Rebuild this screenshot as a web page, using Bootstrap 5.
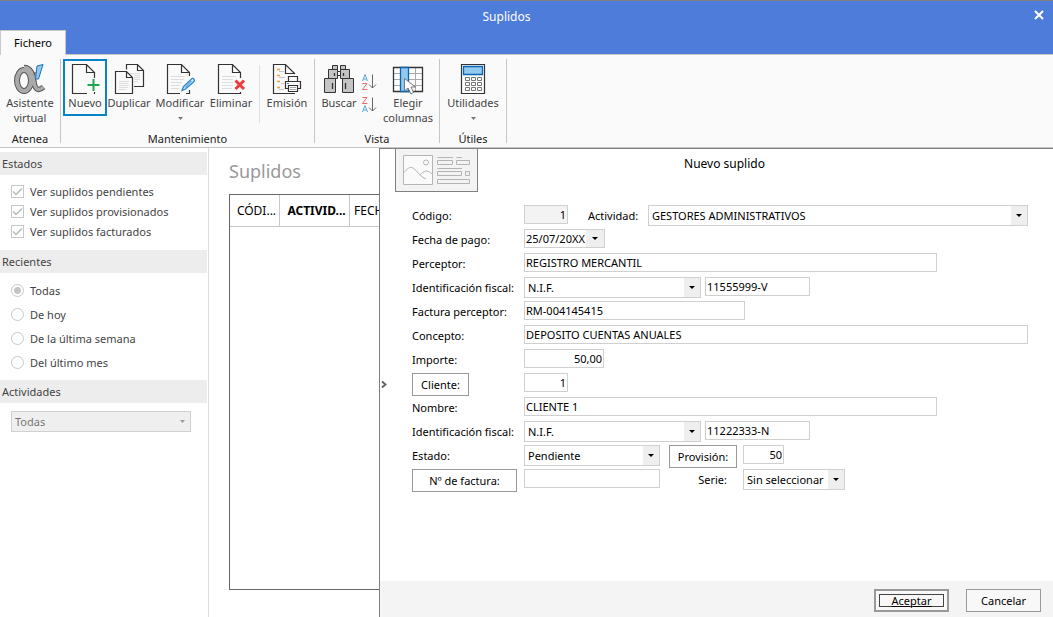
<!DOCTYPE html>
<html lang="es">
<head>
<meta charset="utf-8">
<meta name="viewport" content="width=device-width, initial-scale=1">
<title>Suplidos</title>
<link rel="stylesheet" href="https://cdn.jsdelivr.net/npm/bootstrap@5.3.0/dist/css/bootstrap.min.css">
<style>
  body { font-family: "Noto Sans", "Open Sans", sans-serif; font-size: 11px; line-height: 15px; color: #000; }
  button, input, select { font-family: inherit; font-size: inherit; line-height: inherit; color: inherit; }

  /* Title bar and tab */
  .titlebar { background: #4e7cdb; border-top: 1px solid #808080; padding: 3px 40px 0 0; }
  .titlebar h1 { font-size: 12px; line-height: 26px; }
  .close-x { width: 28px; height: 24px; top: 0; right: 0; }
  .tabstrip { background: #4e7cdb; height: 25px; }
  .tab-file { background: #fafafa; width: 66px; border: 1px solid #c8c8c8; border-bottom: 0; padding-bottom: 1px; position: relative; z-index: 1; }

  /* Ribbon */
  .ribbon { background: #fafafa; border-top: 1px solid #c8c8c8; border-bottom: 1px solid #c6c6c6; height: 94px; margin-top: -1px; padding: 4px 0; }
  .rgroup { border-right: 1px solid #c6c6c6; padding: 0 2px; }
  .rgroup .caption-text { line-height: 9px; color: #222; }
  .tool { border: 2px solid transparent; background: none; padding: 2px 0 0; height: 57px; color: #444; white-space: nowrap; display: flex; flex-direction: column; align-items: center; }
  .tool.tall { height: 66px; }
  .tool svg { flex: none; }
  .tool .drop { margin-top: 7px; }
  .tool.current { border-color: #0a84c8; }
  .w44 { width: 44px; } .w50 { width: 50px; } .w56 { width: 56px; } .w58 { width: 58px; }
  .sep { width: 1px; height: 58px; background: #e0e0e0; margin: 6px 2px 0 6px; }
  .sorters { padding-top: 14px; gap: 5px; }
  .sorter { border: 0; background: none; padding: 0; display: block; width: 18px; height: 18px; }
  .sorter svg { display: block; }

  /* Sidebar */
  .side { width: 209px; border-right: 1px solid #dcdcdc; color: #444; padding-top: 4px; }
  .side h2 { font-size: 11px; line-height: 23px; background: #ededed; margin: 0 1px 0 0; padding-left: 2px; }
  .side label { margin-left: 6px; }
  .side input { appearance: none; width: 13px; height: 13px; border: 1px solid #c8c8c8; margin: 0; background: #fff center no-repeat; }
  .side input[type=checkbox] { background-image: url("data:image/svg+xml,%3Csvg xmlns='http://www.w3.org/2000/svg' width='11' height='11'%3E%3Cpath d='M1 5.5L4 8.5L10 2.5' fill='none' stroke='%23b8b8b8' stroke-width='1.5'/%3E%3C/svg%3E"); }
  .side input[type=radio] { border-radius: 50%; }
  .side input[type=radio]:checked { background-image: radial-gradient(circle, #c4c4c4 3px, transparent 4px); }
  .checks { padding: 6px 11px 9px; }
  .checks > div { height: 20px; }
  .radios { padding: 5px 11px 6px; }
  .radios > div { height: 24px; }
  .side select { appearance: none; display: block; width: 180px; height: 21px; margin: 8px 0 0 11px; border: 1px solid #d0d0d0; border-radius: 0; padding: 0 3px; color: #777; opacity: 1;
    background: #efefef url("data:image/svg+xml,%3Csvg xmlns='http://www.w3.org/2000/svg' width='5' height='3'%3E%3Cpath d='M0 0H5L2.5 3Z' fill='%23999'/%3E%3C/svg%3E") no-repeat right 5px center; }

  /* List behind the dialog */
  .list-pane { width: 170px; padding: 11px 0 27px 20px; }
  .list-pane h2 { font-size: 18px; line-height: 24px; color: #999; margin-bottom: 11px; }
  .list-box { border: 1px solid #666; width: 780px; }
  .list-box table { border-collapse: separate; border-spacing: 0; table-layout: fixed; width: 100%; font-size: 12px; }
  .list-box th { height: 32px; font-weight: 400; border: solid #c8c8c8; border-width: 0 1px 1px 0; padding: 0 0 0 4px; }
  .col-code { width: 50px; } .col-act { width: 70px; }

  /* Dialog */
  .dlg { border: solid #808080; border-width: 1px 0 0 1px; min-width: 0; }
  .layout-btn { width: 83px; height: 44px; margin: -1px 0 0 15px; border: 1px solid #808080; background: #f3f3f3; padding: 0; }
  .layout-btn svg { display: block; margin: 0 auto; }
  .dlg-title { font-size: 12px; line-height: 30px; margin: 0 82px 0 0; }
  .entry { margin: 13px 25px 0 32px; }
  .entry .line { display: grid; grid-template-columns: 112px 1fr; height: 24px; align-items: start; justify-items: start; }
  .entry .line > div { width: 100%; }
  .entry label { line-height: 22px; white-space: nowrap; }
  .field { height: 19px; border: 1px solid #d0d0d0; padding: 0 1px 1px; min-width: 0; background: #fff; border-radius: 0; }
  .field.num { text-align: right; }
  .field:read-only { background: #f3f3f3; }
  div.field { background: #fff; }
  .pick { appearance: none; height: 21px; border: 1px solid #d0d0d0; border-radius: 0; padding: 0 18px 0 3px; min-width: 0;
    background: url("data:image/svg+xml,%3Csvg xmlns='http://www.w3.org/2000/svg' width='16' height='19'%3E%3Cpath d='M0 0H16V19H0Z' fill='%23efefef'/%3E%3Cpath d='M5 8H11L8 11Z'/%3E%3C/svg%3E") no-repeat right center #fff; }
  .plain { border: 1px solid #999; background: #fff; height: 23px; padding: 0; }
  .w-code { width: 44px; } .w-date { width: 81px; } .w-amount { width: 80px; }
  .w-type { width: 177px; } .w-id { width: 105px; } .w-invoice { width: 221px; }
  .w-name { width: 82%; } .w-state { width: 136px; } .w-serie { width: 102px; } .w-prov { width: 41px; }
  .b-client { width: 57px; } .b-invoice { width: 105px; } .b-prov { width: 68px; margin: 0 6px 0 9px; }
  .l-act { width: 60px; margin-left: 20px; } .l-serie { width: 83px; padding: 0 16px; text-align: right; }
  .date-in { border: 0; padding: 0 1px 1px; width: 61px; background: #fff; }
  .date-btn { width: 18px; border: 0; background: #efefef; padding: 0; display: flex; align-items: center; justify-content: center; }
  .foot { background: #f4f4f4; height: 36px; padding: 8px 12px 0; gap: 17px; }
  .foot .plain { width: 75px; background: #f8f8f8; }
  .foot .main-action { border: 2px solid #999; padding: 3px; }
  .main-action span { display: block; border: 1px solid #444; line-height: 11px; text-decoration: underline; }
  .expander { border: 0; background: none; padding: 0 1px; line-height: 1; }
</style>
</head>
<body class="d-flex flex-column min-vh-100 bg-white">

<header class="titlebar position-relative text-white text-center">
  <h1 class="m-0 fw-normal">Suplidos</h1>
  <button class="close-x position-absolute border-0 bg-transparent p-0" aria-label="Cerrar">
    <svg width="10" height="10" viewBox="0 0 10 10"><path d="M1 1L9 9M9 1L1 9" stroke="#fff" stroke-width="2"/></svg>
  </button>
</header>
<nav class="tabstrip d-flex">
  <a href="#" class="tab-file d-flex align-items-center justify-content-center text-black text-decoration-none">Fichero</a>
</nav>

<section class="ribbon d-flex">
  <div class="rgroup d-flex flex-column justify-content-between align-items-center">
    <button class="tool tall w56">
      <svg width="32" height="32" viewBox="0 0 32 32" fill="none">
        <g stroke="#555"><path d="M22 9C21 18 17 27 11 29" stroke-width="3"/><path d="M10 4.500C17 4.500 18.500 11 20 19C21 26 24 29 29.500 24" stroke-width="5.500"/><ellipse cx="10" cy="17.500" rx="7" ry="10.500" stroke-width="6"/></g>
        <g stroke="#aaa"><path d="M22 9C21 18 17 27 11 29" stroke-width="1.200"/><path d="M10 4.500C17 4.500 18.500 11 20 19C21 26 24 29 29.500 24" stroke-width="3.500"/><ellipse cx="10" cy="17.500" rx="7" ry="10.500" stroke-width="4"/></g>
        <path d="M23 3L29 1.500L24.500 16H21.500Z" fill="#92c9f0" stroke="#1e6fb5"/>
      </svg>
      <span>Asistente</span><span>virtual</span>
    </button>
    <div class="caption-text">Atenea</div>
  </div>

  <div class="rgroup d-flex flex-column justify-content-between align-items-center">
    <div class="d-flex">
      <button class="tool current w44">
        <svg width="32" height="32" viewBox="0 0 32 32" fill="none"><path d="M25.500 15V9.500L17.500 1.500H3.500V30.500H18M17.500 1.500V9.500H25.500M25.500 29V31" stroke="#333" stroke-width="1.200"/><path d="M24.500 16V28M18.500 22H30.500" stroke="#1da84f" stroke-width="2"/></svg>
        <span>Nuevo</span>
      </button>
      <button class="tool w44">
        <svg width="32" height="32" viewBox="0 0 32 32" fill="none"><path d="M13.500 6.500V1.500H24.500L30.500 7.500V23.500H21M24.500 1.500V7.500H30.500M13.500 8.500H2.500V30.500H19.500V14.500ZM13.500 8.500V14.500H19.500" stroke="#333" stroke-width="1.200"/><path d="M6 18.500H16M6 20.500H15M6 22.500H16M6 24.500H15M6 26.500H13M17 10.500H27M21 12.500H27M21 14.500H27M21 16.500H27M21 18.500H25" stroke="#ddd"/></svg>
        <span>Duplicar</span>
      </button>
      <button class="tool w58">
        <svg width="32" height="32" viewBox="0 0 32 32" fill="none"><path d="M25.500 13V9.500L17.500 1.500H3.500V30.500H16M17.500 1.500V9.500H25.500M25.500 27V30.500H22" stroke="#333" stroke-width="1.200"/><path d="M7 13.500H21M7 16.500H20M7 19.500H18M7 22.500H16M7 25.500H15" stroke="#ddd"/><path d="M18 27.500L19.500 23.500L28 15.500C30 15 31 17 30 18.500L21.500 26Z" fill="#cfe6f6" stroke="#2a87cc" stroke-width="1.300"/><path d="M21 24.500L27.500 18" stroke="#2a87cc"/></svg>
        <span>Modificar</span>
        <svg class="drop" width="5" height="3"><path d="M0 0H5L2.500 3Z" fill="#777"/></svg>
      </button>
      <button class="tool w44">
        <svg width="32" height="32" viewBox="0 0 32 32" fill="none"><path d="M25.500 15V9.500L17.500 1.500H3.500V30.500H25.500V29M17.500 1.500V9.500H25.500" stroke="#333" stroke-width="1.200"/><path d="M7 13.500H21M7 16.500H18M7 19.500H18M7 22.500H18M7 25.500H17" stroke="#ddd"/><path d="M20.500 17.500L29 26M29 17.500L20.500 26" stroke="#ef3b3b" stroke-width="3"/></svg>
        <span>Eliminar</span>
      </button>
      <div class="sep"></div>
      <button class="tool w50">
        <svg width="32" height="32" viewBox="0 0 32 32" fill="none"><path d="M24 11L14.500 1.500H2.500V30.500H24M14.500 1.500V10.500H24" stroke="#333" stroke-width="1.200"/><path d="M6 6.500H9M6 12.500H9M6 18.500H9M6 24.500H9" stroke="#f0a030" stroke-width="1.500"/><path d="M8 8.500H13M8 14.500H14M10 20.500H13M8 26.500H13" stroke="#c8c8c8"/><path d="M17.500 18V13.500H26.500V18M18 25.500H14.500V18.500H29.500V25.500H27" fill="#fafafa" stroke="#333" stroke-width="1.200"/><path d="M17.500 22.500H26.500V28.500H17.500Z" fill="#fff" stroke="#333" stroke-width="1.200"/><path d="M19 24.500H25M19 26.500H25" stroke="#aaa"/><path d="M16 20.500H18" stroke="#2a87cc"/></svg>
        <span>Emisión</span>
      </button>
    </div>
    <div class="caption-text">Mantenimiento</div>
  </div>

  <div class="rgroup d-flex flex-column justify-content-between align-items-center">
    <div class="d-flex">
      <button class="tool w44">
        <svg width="32" height="32" viewBox="0 0 32 32"><g fill="#c4c4c4" stroke="#333"><path d="M9.500 2.500H14.500V6.500H9.500ZM17.500 2.500H22.500V6.500H17.500ZM5.500 6.500H14.500V15.500H5.500ZM17.500 6.500H26.500V15.500H17.500ZM1.500 15.500H12.500V29.500H1.500ZM19.500 15.500H30.500V29.500H19.500Z"/><path d="M14.500 8.500H17.500V12.500H14.500Z" fill="#fff"/><path d="M11.500 10V13M20.500 10V13M9.500 20V26M22.500 20V26" stroke-width="1.300"/></g></svg>
        <span>Buscar</span>
      </button>
      <div class="sorters d-flex flex-column">
        <button class="sorter" aria-label="Orden ascendente"><svg width="18" height="18" viewBox="0 0 18 18" fill="none"><path d="M1.500 8L4 1.500L6.500 8M2.500 6H5.500" stroke="#58a9dc"/><path d="M1.500 10.500H6L1.500 16.500H6.500" stroke="#ee6a6a"/><path d="M11.500 1.500V15M8 11.500L11.500 15L15 11.500" stroke="#666"/></svg></button>
        <button class="sorter" aria-label="Orden descendente"><svg width="18" height="18" viewBox="0 0 18 18" fill="none"><path d="M1.500 1.500H6L1.500 7.500H6.500" stroke="#ee6a6a"/><path d="M1.500 16L4 9.500L6.500 16M2.500 14H5.500" stroke="#58a9dc"/><path d="M11.500 1.500V15M8 11.500L11.500 15L15 11.500" stroke="#666"/></svg></button>
      </div>
      <button class="tool tall w58">
        <svg width="32" height="32" viewBox="0 0 32 32" fill="none"><path d="M1.500 4.500H30.500V28.500H1.500Z" fill="#fff"/><path d="M2 10.500H30M2 16.500H30M2 22.500H30M23.500 5V28" stroke="#aaa"/><path d="M1.500 4.500H30.500V28.500H1.500Z" stroke="#333" stroke-width="1.300"/><path d="M8.500 4.500H16.500V28.500H8.500Z" fill="#92c9f0" stroke="#0a66b0" stroke-width="1.300"/><path d="M12.500 15.500V28L16 25L19 31L21.500 29.500L19 24H23.500Z" fill="#fff" stroke="#777"/></svg>
        <span>Elegir</span><span>columnas</span>
      </button>
    </div>
    <div class="caption-text">Vista</div>
  </div>

  <div class="rgroup d-flex flex-column justify-content-between align-items-center px-1">
    <button class="tool w58">
      <svg width="32" height="32" viewBox="0 0 32 32" fill="none"><path d="M4.500 1.500H27.500V30.500H4.500Z" fill="#fff" stroke="#333" stroke-width="1.200"/><path d="M6.500 3.500H25.500V11.500H6.500Z" fill="#92c9f0" stroke="#0a66b0" stroke-width="1.300"/><path d="M8.500 14.500H12.500V17.500H8.500ZM14.500 14.500H18.500V17.500H14.500ZM20.500 14.500H24.500V17.500H20.500ZM8.500 19.500H12.500V22.500H8.500ZM14.500 19.500H18.500V22.500H14.500ZM20.500 19.500H24.500V22.500H20.500ZM8.500 24.500H12.500V27.500H8.500ZM14.500 24.500H18.500V27.500H14.500ZM20.500 24.500H24.500V27.500H20.500Z" stroke="#777"/></svg>
      <span>Utilidades</span>
      <svg class="drop" width="5" height="3"><path d="M0 0H5L2.500 3Z" fill="#777"/></svg>
    </button>
    <div class="caption-text">Útiles</div>
  </div>
</section>

<main class="d-flex flex-grow-1">
  <aside class="side flex-shrink-0">
    <h2 class="fw-normal">Estados</h2>
    <div class="checks">
      <div class="d-flex align-items-center"><input type="checkbox" id="pend" checked disabled><label for="pend">Ver suplidos pendientes</label></div>
      <div class="d-flex align-items-center"><input type="checkbox" id="prov" checked disabled><label for="prov">Ver suplidos provisionados</label></div>
      <div class="d-flex align-items-center"><input type="checkbox" id="fact" checked disabled><label for="fact">Ver suplidos facturados</label></div>
    </div>
    <h2 class="fw-normal">Recientes</h2>
    <div class="radios">
      <div class="d-flex align-items-center"><input type="radio" name="rec" id="r-all" checked disabled><label for="r-all">Todas</label></div>
      <div class="d-flex align-items-center"><input type="radio" name="rec" id="r-day" disabled><label for="r-day">De hoy</label></div>
      <div class="d-flex align-items-center"><input type="radio" name="rec" id="r-week" disabled><label for="r-week">De la última semana</label></div>
      <div class="d-flex align-items-center"><input type="radio" name="rec" id="r-month" disabled><label for="r-month">Del último mes</label></div>
    </div>
    <h2 class="fw-normal" id="act-head">Actividades</h2>
    <select aria-labelledby="act-head" disabled><option>Todas</option></select>
  </aside>

  <section class="list-pane flex-shrink-0 overflow-hidden d-flex flex-column">
    <h2 class="fw-normal">Suplidos</h2>
    <div class="list-box flex-grow-1">
      <table>
        <thead><tr><th class="col-code text-center">CÓDI...</th><th class="col-act text-center fw-bold">ACTIVID...</th><th>FECH</th></tr></thead>
      </table>
    </div>
  </section>

  <section class="dlg flex-grow-1 d-flex flex-column position-relative">
    <button class="expander position-absolute top-50 start-0 translate-middle-y" aria-label="Desplegar">
      <svg width="6" height="8" viewBox="0 0 6 8" fill="none"><path d="M1 1L4.500 4L1 7" stroke="#666" stroke-width="2"/></svg>
    </button>
    <div class="d-flex align-items-start">
      <button class="layout-btn" aria-label="Diseño">
        <svg width="69" height="34" viewBox="0 0 69 34" fill="none" stroke="#b4b4b4"><path d="M1.500 2.500H30.500V31.500H1.500Z" fill="#fafafa"/><circle cx="24" cy="9.500" r="2.500"/><path d="M1.500 20C5 16 8 13 11 15C16 18 18 24 24 26M18 22C22 18 25 16 30 21"/><path d="M35.500 4.500H51M54.500 4.500H60M35.500 15.500H60M35.500 7.500H50.500V11.500H35.500ZM54.500 7.500H67.500V11.500H54.500ZM35.500 18.500H59.500V22.500H35.500ZM63.500 18.500H67.500V22.500H63.500ZM35.500 26.500H67.500V30.500H35.500Z"/></svg>
      </button>
      <h2 class="dlg-title fw-normal flex-grow-1 text-center">Nuevo suplido</h2>
    </div>

    <form class="entry">
      <div class="line">
        <label for="codigo">Código:</label>
        <div class="d-flex align-items-start">
          <input class="field num w-code" id="codigo" value="1" readonly>
          <label class="l-act" for="actividad">Actividad:</label>
          <select class="pick flex-grow-1" id="actividad"><option>GESTORES ADMINISTRATIVOS</option></select>
        </div>
      </div>
      <div class="line">
        <label for="fecha">Fecha de pago:</label>
        <div class="d-flex">
          <div class="field w-date d-flex p-0"><input class="date-in" id="fecha" value="25/07/20XX"><button type="button" class="date-btn" aria-label="Abrir calendario"><svg width="6" height="3"><path d="M0 0H6L3 3Z"/></svg></button></div>
        </div>
      </div>
      <div class="line">
        <label for="perceptor">Perceptor:</label>
        <div class="d-flex"><input class="field w-name" id="perceptor" value="REGISTRO MERCANTIL"></div>
      </div>
      <div class="line">
        <label for="tipo1">Identificación fiscal:</label>
        <div class="d-flex align-items-start gap-1">
          <select class="pick w-type" id="tipo1"><option>N.I.F.</option></select>
          <input class="field w-id" aria-label="Número de identificación del perceptor" value="11555999-V">
        </div>
      </div>
      <div class="line">
        <label for="factura-p">Factura perceptor:</label>
        <div class="d-flex"><input class="field w-invoice" id="factura-p" value="RM-004145415"></div>
      </div>
      <div class="line">
        <label for="concepto">Concepto:</label>
        <div class="d-flex"><input class="field flex-grow-1" id="concepto" value="DEPOSITO CUENTAS ANUALES"></div>
      </div>
      <div class="line">
        <label for="importe">Importe:</label>
        <div class="d-flex"><input class="field num w-amount" id="importe" value="50,00"></div>
      </div>
      <div class="line">
        <button type="button" class="plain b-client">Cliente:</button>
        <div class="d-flex"><input class="field num w-code" aria-label="Cliente" value="1"></div>
      </div>
      <div class="line">
        <label for="nombre">Nombre:</label>
        <div class="d-flex"><input class="field w-name" id="nombre" value="CLIENTE 1"></div>
      </div>
      <div class="line">
        <label for="tipo2">Identificación fiscal:</label>
        <div class="d-flex align-items-start gap-1">
          <select class="pick w-type" id="tipo2"><option>N.I.F.</option></select>
          <input class="field w-id" aria-label="Número de identificación del cliente" value="11222333-N">
        </div>
      </div>
      <div class="line">
        <label for="estado">Estado:</label>
        <div class="d-flex align-items-start">
          <select class="pick w-state" id="estado"><option>Pendiente</option></select>
          <button type="button" class="plain b-prov">Provisión:</button>
          <input class="field num w-prov" aria-label="Provisión" value="50">
        </div>
      </div>
      <div class="line">
        <button type="button" class="plain b-invoice">Nº de factura:</button>
        <div class="d-flex align-items-start">
          <input class="field w-state" aria-label="Nº de factura">
          <label class="l-serie" for="serie">Serie:</label>
          <select class="pick w-serie" id="serie"><option>Sin seleccionar</option></select>
        </div>
      </div>
    </form>

    <div class="foot d-flex justify-content-end mt-auto">
      <button class="plain main-action"><span>Aceptar</span></button>
      <button class="plain">Cancelar</button>
    </div>
  </section>
</main>
<script src="https://cdn.jsdelivr.net/npm/bootstrap@5.3.0/dist/js/bootstrap.bundle.min.js"></script>
</body>
</html>
